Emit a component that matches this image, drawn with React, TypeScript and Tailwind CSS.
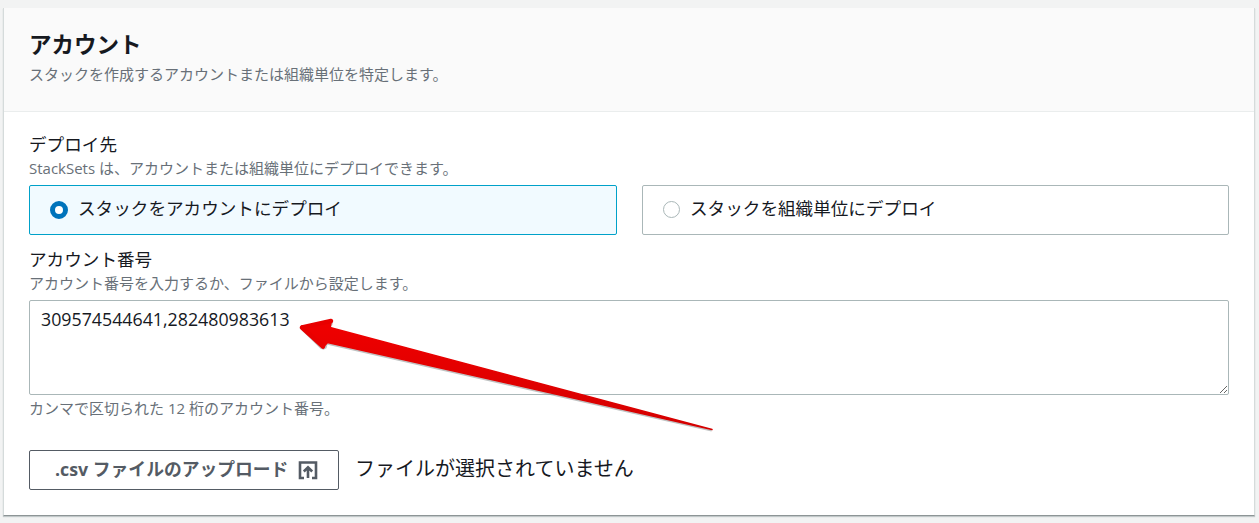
export default function App() {
  const font = { fontFamily: '"Open Sans","Noto Sans CJK JP",sans-serif' };
  return (
    <div style={font} className="relative h-[523px] w-[1259px] overflow-hidden bg-[#f2f3f3] pt-2 pl-[3px]">
      <div className="h-[508px] w-[1252px] border-l border-b border-r border-l-[#d5dbdb] border-r-[#d5dbdb] border-b-[#8d9596] bg-white shadow-[0_1px_1px_rgba(0,28,36,0.2)]">
        <header className="h-[104px] border-b border-[#eaeded] bg-[#fafafa] pl-[25px] pt-[20px]">
          <h2 className="text-[22.5px] leading-[34px] font-bold text-[#16191f]">アカウント</h2>
          <p className="mt-[2px] text-[15px] leading-[20px] text-[#687078]">スタックを作成するアカウントまたは組織単位を特定します。</p>
        </header>
        <div className="pl-[25px] pt-[20px] pr-[24px]">
          <div className="text-[17.6px] leading-[24px] text-[#16191f]">デプロイ先</div>
          <div className="mt-[2px] text-[15px] leading-[20px] text-[#687078]">StackSets は、アカウントまたは組織単位にデプロイできます。</div>
          <div className="mt-[7px] flex gap-[25px]">
            <div className="flex h-[50px] w-[588px] items-center rounded-[2px] border border-[#00a1c9] bg-[#f1faff] pl-[20px]">
              <span className="mb-[1px] h-[18px] w-[18px] rounded-full border-[5px] border-[#0073bb] bg-white" />
              <span className="mb-[3px] ml-[10px] text-[17.6px] text-[#16191f]">スタックをアカウントにデプロイ</span>
            </div>
            <div className="flex h-[50px] w-[587px] items-center rounded-[2px] border border-[#aab7b8] bg-white pl-[20px]">
              <span className="mb-[1px] h-[17px] w-[17px] rounded-full border border-[#aab7b8] bg-white" />
              <span className="mb-[3px] ml-[10px] text-[17.6px] text-[#16191f]">スタックを組織単位にデプロイ</span>
            </div>
          </div>
          <div className="mt-[12px] text-[17.6px] leading-[24px] text-[#16191f]">アカウント番号</div>
          <div className="mt-[2px] text-[15px] leading-[20px] text-[#687078]">アカウント番号を入力するか、ファイルから設定します。</div>
          <textarea
            readOnly
            defaultValue="309574544641,282480983613"
            className="mt-[7px] block h-[95px] w-[1200px] resize rounded-[2px] border border-[#aab7b8] bg-white px-[11px] py-[6px] text-[17.8px] leading-[24px] text-[#16191f] outline-none"
          />
          <div className="mt-[3px] text-[15px] leading-[20px] text-[#687078]">カンマで区切られた 12 桁のアカウント番号。</div>
          <div className="mt-[32px] flex items-center">
            <div className="flex h-[40px] w-[310px] items-center rounded-[2px] border border-[#545b64] bg-white pl-[25px] text-[#545b64]">
              <span className="mb-[2px] text-[17.8px] font-bold">.csv ファイルのアップロード</span>
              <svg className="ml-[10px]" width="20" height="20" viewBox="0 0 20 20" fill="none" stroke="#545b64" strokeWidth="2.6">
                <path d="M6 18H2V2.5h16V18h-4" />
                <path d="M10 18V7.5M5.8 11.5L10 7.3l4.2 4.2" />
              </svg>
            </div>
            <span className="mb-[2px] ml-[16px] text-[20px] text-[#16191f]">ファイルが選択されていません</span>
          </div>
        </div>
      </div>
      <svg className="absolute top-0 left-0" width="1259" height="523" viewBox="0 0 1259 523" fill="none">
        <defs>
          <linearGradient id="a" x1="0" y1="0" x2="0" y2="1">
            <stop offset="0" stopColor="#f00000" />
            <stop offset="1" stopColor="#d40000" />
          </linearGradient>
        </defs>
        <path d="M712 430.2L328 343.5l-1 3.5-3 1.5-3-1L300 327l31-7.5 2.5 1-0.5 3-1.5 2.5 1 3.5L712 428.8z" fill="#8a8f90" transform="translate(-0.5 1.2)" opacity="0.55" />
        <path
          d="M712 429.5L327.5 342.5 323.5 347 301 327.5 331.5 320.5 330 327.5Z"
          fill="url(#a)"
          stroke="url(#a)"
          strokeWidth="1.5"
          strokeLinejoin="round"
        />
        <path d="M302 327.5L331 321M302 327.5L323 346.5" stroke="#e80000" strokeWidth="4.5" strokeLinecap="round" />
      </svg>
    </div>
  );
}
